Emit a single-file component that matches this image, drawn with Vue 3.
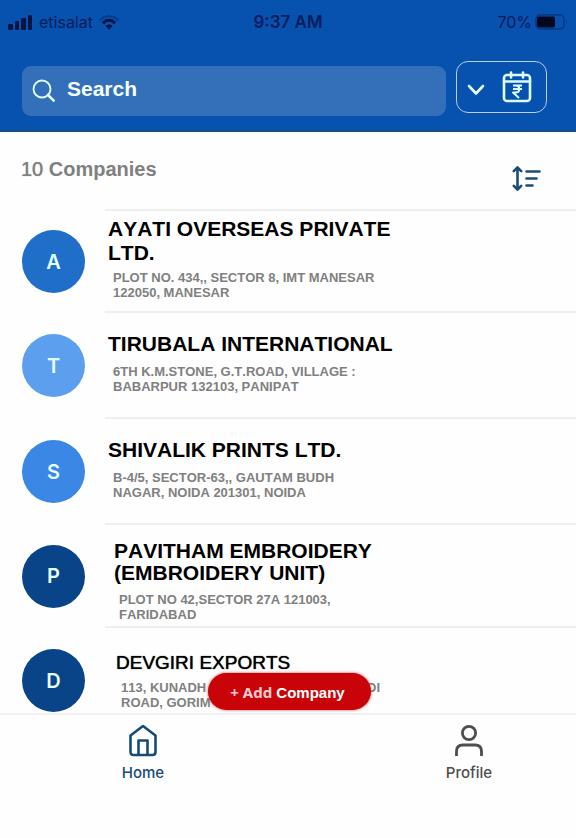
<script setup>
import { ref } from 'vue'

const query = ref('')

const companies = [
  { initial: 'A', color: '#1f6fc9', name: 'AYATI OVERSEAS PRIVATE LTD.', address: [['PLOT NO. 434,, SECTOR 8, IMT MANESAR'], ['122050, MANESAR']], variant: 'compact' },
  { initial: 'T', color: '#5c9fee', name: 'TIRUBALA INTERNATIONAL', address: [['6TH K.M.STONE, G.T.ROAD, VILLAGE :'], ['BABARPUR 132103, PANIPAT']], variant: 'roomy' },
  { initial: 'S', color: '#3a87e6', name: 'SHIVALIK PRINTS LTD.', address: [['B-4/5, SECTOR-63,, GAUTAM BUDH'], ['NAGAR, NOIDA 201301, NOIDA']], variant: 'roomy' },
  { initial: 'P', color: '#084487', name: 'PAVITHAM EMBROIDERY (EMBROIDERY UNIT)', address: [['PLOT NO 42,SECTOR 27A 121003,'], ['FARIDABAD']], variant: 'low' },
  { initial: 'D', color: '#084487', name: 'DEVGIRI EXPORTS', address: [['113, KUNADH', 'DI'], ['ROAD, GORIM']], variant: 'last' },
]
</script>

<template>
  <div class="app">
    <header class="header">
      <div class="status">
        <div class="carrier">
          <svg width="25" height="15" viewBox="0 0 25 15" aria-hidden="true">
            <rect x="0" y="9" width="5" height="6" rx="1" />
            <rect x="7" y="6" width="4" height="9" rx="1" />
            <rect x="13" y="3" width="5" height="12" rx="1" />
            <rect x="20" y="0" width="4" height="15" rx="1" />
          </svg>
          <span>etisalat</span>
          <svg width="20" height="15" viewBox="0 0 20 15" aria-hidden="true">
            <path d="M1 5.2C6-.2 14-.2 19 5.2" fill="none" stroke="#063a8a" stroke-width="2" />
            <path d="M4 8.200C7.400 4.400 12.600 4.400 16 8.200" fill="none" stroke="#071444" stroke-width="3" />
            <path d="M6.500 11C8.600 9 11.400 9 13.500 11L10 14.800Z" />
          </svg>
        </div>
        <div class="time">9:37 AM</div>
        <div class="battery">
          <span>70%</span>
          <svg width="33" height="16" viewBox="0 0 33 16" aria-hidden="true">
            <rect x="1" y="1" width="28" height="14" rx="4" fill="none" stroke="#07367e" stroke-width="1.500" />
            <rect x="2" y="2.500" width="18" height="11" rx="2" fill="#020820" />
            <path d="M31 5.500q2 2.500 0 5z" fill="#07367e" />
          </svg>
        </div>
      </div>
      <div class="tools">
        <label class="search">
          <svg width="24" height="24" viewBox="0 0 24 24" fill="none" stroke="#dffcff" aria-hidden="true">
            <circle cx="10" cy="10" r="8.500" stroke-width="1.900" />
            <path d="M16 16l5.700 5.700" stroke-width="2.600" stroke-linecap="round" />
          </svg>
          <input v-model="query" type="text" placeholder="Search" aria-label="Search" />
        </label>
        <button class="period" type="button" aria-label="Payment calendar">
          <svg width="18" height="18" viewBox="0 0 18 18" fill="none" stroke="#e4ffff" stroke-width="2.600" stroke-linecap="round" stroke-linejoin="round" aria-hidden="true">
            <path d="M2 8l7 7.500L16 8" />
          </svg>
          <svg width="30" height="32" viewBox="0 0 30 32" fill="none" stroke="#dcfdff" stroke-width="2.600" stroke-linecap="round" stroke-linejoin="round" aria-hidden="true">
            <rect x="2" y="4" width="26" height="26" rx="3" />
            <path d="M2 10.500h26" />
            <path d="M9 1.500v5M21 1.500v5" />
            <path d="M11 14.500h9M11 18h9M11 14.500h2.500c5 0 5 7 0 7H11l6 5.500" stroke-width="2" stroke-linecap="butt" />
          </svg>
        </button>
      </div>
    </header>

    <main class="content">
      <div class="summary">
        <h1><span>10</span> Companies</h1>
        <button class="sort" type="button" aria-label="Sort">
          <svg width="29" height="25" viewBox="0 0 29 25" fill="none" stroke="#1c4e74" stroke-width="2.600" stroke-linecap="round" stroke-linejoin="round" aria-hidden="true">
            <path d="M5.500 2v21M1.800 5.200L5.500 1.500l3.700 3.700M1.800 19.800l3.700 3.700 3.700-3.700" />
            <path d="M14.500 5.500h13M14.500 12.500h10M14.500 19.500h6" />
          </svg>
        </button>
      </div>
      <ul class="list">
        <li v-for="c in companies" :key="c.name" class="row">
          <div class="avatar" :style="{ background: c.color }">{{ c.initial }}</div>
          <div class="details" :class="c.variant">
            <h2>{{ c.name }}</h2>
            <p v-for="(line, i) in c.address" :key="i">
              <span v-for="part in line" :key="part">{{ part }}</span>
            </p>
          </div>
        </li>
      </ul>
    </main>

    <footer class="footer">
      <button class="add" type="button"><span>+ Add</span> Company</button>
      <nav class="tabs" aria-label="Main">
        <a class="active" href="#home">
          <svg width="30" height="33" viewBox="0 0 30 33" fill="none" stroke="#174b75" stroke-width="2.600" stroke-linejoin="round" aria-hidden="true">
            <path d="M2.500 11.500L15 2l12.500 9.500V28q0 3-3 3h-19q-3 0-3-3z" />
            <path d="M10.500 31V16.500h9V31" />
          </svg>
          <span>Home</span>
        </a>
        <a href="#profile">
          <svg width="30" height="33" viewBox="0 0 30 33" fill="none" stroke="#4d4d4f" stroke-width="2.800" aria-hidden="true">
            <circle cx="15" cy="9" r="6.600" />
            <path d="M2.500 32V27.500q0-6.500 6.500-6.500h12q6.500 0 6.500 6.500V32" />
          </svg>
          <span>Profile</span>
        </a>
      </nav>
    </footer>
  </div>
</template>

<style>
body {
  margin: 0;
  background: #fff;
}
</style>

<style scoped>
* {
  box-sizing: border-box;
}

.app {
  display: flex;
  flex-direction: column;
  height: 100vh;
  background: #fefefe;
  font-family: "Liberation Sans", Arial, sans-serif;
  font-kerning: none;
}

button {
  padding: 0;
  border: 0;
  background: none;
  font-family: inherit;
  cursor: pointer;
}

svg {
  display: block;
  flex: none;
}

.header {
  flex: none;
  padding-bottom: 14px;
  border-bottom: 2px solid #164d8c;
  background: #0652ae;
}

.status {
  display: grid;
  grid-template-columns: 1fr auto 1fr;
  align-items: center;
  height: 44px;
  padding: 0 8px;
  color: #071c5c;
  fill: #071444;
  font: 400 16px/20px Inter, sans-serif;
}

.carrier,
.battery {
  display: flex;
  align-items: center;
  gap: 6px;
}

.battery {
  justify-content: flex-end;
  gap: 3px;
}

.time {
  font-size: 17px;
  font-weight: 600;
}

.tools {
  display: flex;
  align-items: flex-start;
  gap: 10px;
  padding: 17px 29px 0 22px;
}

.search {
  display: flex;
  flex: 1;
  align-items: center;
  gap: 11px;
  height: 50px;
  margin-top: 5px;
  padding: 0 10px;
  border-radius: 9px;
  background: #3470b9;
}

.search input {
  flex: 1;
  min-width: 0;
  padding: 0 0 4px;
  border: 0;
  outline: 0;
  background: none;
  color: #f4ffff;
  font: 700 21px/24px "Liberation Sans", Arial, sans-serif;
}

.search input::placeholder {
  color: #f4ffff;
  opacity: 1;
}

.period {
  display: flex;
  align-items: center;
  justify-content: space-between;
  width: 91px;
  height: 52px;
  padding: 0 14px 0 10px;
  border: 1px solid #b9cfea;
  border-radius: 12px;
}

.content {
  flex: 1;
  min-height: 0;
  overflow: hidden;
}

.summary {
  display: flex;
  align-items: center;
  justify-content: space-between;
  height: 77px;
  padding: 0 35px 4px 21px;
}

.summary h1 {
  margin: 0;
  color: #808080;
  font-size: 20px;
  line-height: 24px;
}

.summary h1 span {
  font-weight: 400;
  text-shadow: 0 0 1px #808080;
}

.sort {
  padding-top: 20px;
}

.list {
  margin: 0;
  padding: 0;
  list-style: none;
}

.row {
  display: flex;
  align-items: center;
  padding-left: 22px;
  gap: 20px;
}

.avatar {
  display: grid;
  flex: none;
  place-items: center;
  width: 63px;
  height: 63px;
  margin-top: 3px;
  border-radius: 50%;
  color: #e6ffff;
  font: 600 20px/24px Inter, sans-serif;
}

.details {
  display: flex;
  flex: 1;
  flex-direction: column;
  justify-content: center;
  border-top: 2px solid #eeefef;
}

.details h2 {
  max-width: 300px;
  margin: 0 0 8px;
  color: #000;
  font-size: 21px;
  line-height: 24px;
}

.details p {
  display: flex;
  justify-content: space-between;
  width: 264px;
  margin: 0;
  padding-left: 5px;
  color: #808080;
  font-size: 13px;
  font-weight: 700;
  line-height: 15px;
  white-space: nowrap;
}

.compact {
  min-height: 102px;
  padding: 0 0 6px 3px;
}

.compact h2 {
  margin-bottom: 5px;
}

.roomy {
  min-height: 106px;
  padding: 0 0 4px 3px;
}

.low {
  min-height: 103px;
  padding: 11px 0 0 9px;
}

.low h2 {
  line-height: 22px;
}

.last {
  min-height: 106px;
  padding-left: 11px;
}

.last h2 {
  margin-bottom: 5px;
  font-size: 19px;
  font-weight: 400;
  text-shadow: 0 0 1px #000;
}

.footer {
  position: relative;
  flex: none;
  border-top: 2px solid #f1f1f1;
  background: #fefefe;
}

.add {
  position: absolute;
  bottom: 100%;
  left: 50%;
  width: 163px;
  height: 37px;
  margin: 0 0 5px -80px;
  padding-right: 4px;
  border-radius: 19px;
  background: #c90409;
  box-shadow: 0 0 3px #d8434a;
  color: #fff;
  font-size: 15px;
  font-weight: 700;
}

.add span {
  color: #ffc9d2;
  font-family: "Noto Sans", sans-serif;
}

.tabs {
  display: flex;
  justify-content: space-between;
  padding: 9px 82px 55px 118px;
}

.tabs a {
  display: flex;
  flex-direction: column;
  align-items: center;
  gap: 6px;
  width: 50px;
  color: #4d4d4f;
  font: 500 15px/20px Inter, sans-serif;
  text-decoration: none;
}

.tabs a.active {
  color: #174b75;
}
</style>
